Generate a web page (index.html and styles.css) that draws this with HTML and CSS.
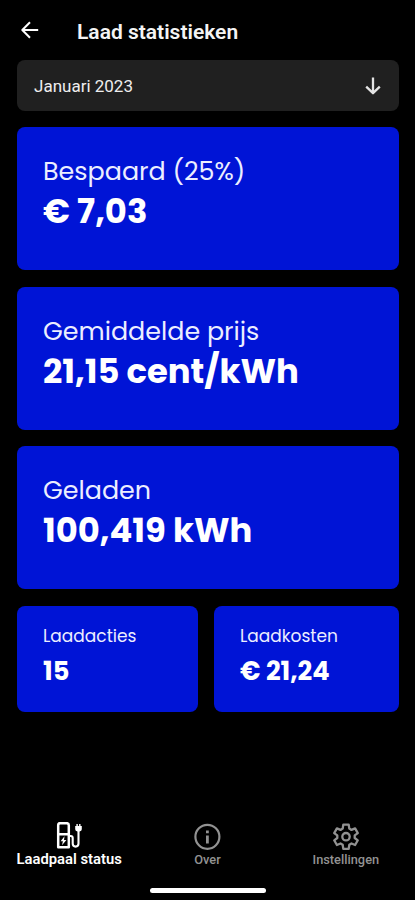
FILE: index.html
```html
<!DOCTYPE html>
<html lang="nl">
<head>
<meta charset="utf-8">
<title>Laad statistieken</title>
<link rel="stylesheet" href="styles.css">
</head>
<body>
<header class="topbar">
  <svg class="back" viewBox="0 0 20 20"><path d="M18.2 10H2.5M10 2.3L2.3 10l7.7 7.7"/></svg>
  <h1>Laad statistieken</h1>
</header>
<main class="content">
  <div class="select"><span>Januari 2023</span>
    <svg class="down" viewBox="0 0 18 20"><path d="M9 1.5v15M2.2 10.6L9 17.2l6.8-6.6"/></svg>
  </div>
  <section class="card"><div class="label">Bespaard (25%)</div><div class="value">€ 7,03</div></section>
  <section class="card"><div class="label">Gemiddelde prijs</div><div class="value">21,15 cent/kWh</div></section>
  <section class="card"><div class="label">Geladen</div><div class="value">100,419 kWh</div></section>
  <div class="row">
    <section class="card small"><div class="label">Laadacties</div><div class="value">15</div></section>
    <section class="card small"><div class="label">Laadkosten</div><div class="value">€ 21,24</div></section>
  </div>
</main>
<nav class="tabs">
  <div class="tab active">
    <svg viewBox="0 0 28 28"><path d="M3.2 25.2V3.2Q3.2 1.2 5.2 1.2h6.6q2 0 2 2v22zM3.2 12.2h10.6" stroke-width="2.5"/><path d="M13.8 14h1.9q2 0 2 2v5.6q0 3 2.9 3t2.9-3V9" stroke-width="2.1"/><path class="fill" d="M20.2 4h1.2V2h1.4v2h1.3V2h1.4v2h1.3v3.2q0 2-2.3 2.3h-2q-2.3-.3-2.3-2.3zM9.5 14.2l-3.9 5.1h2.3l-.9 4 4.4-5.4H9z"/></svg>
    <span>Laadpaal status</span>
  </div>
  <div class="tab">
    <svg viewBox="0 0 28 28"><circle cx="14.4" cy="14.8" r="12" stroke-width="2.2"/><path d="M14.4 13.5v8M14.4 8.4v2.8" stroke-width="2.8"/></svg>
    <span>Over</span>
  </div>
  <div class="tab">
    <svg viewBox="0 0 28 28"><path d="M11.3 2.6h5.4l.6 4 2.2 1.3 3.6-1.5 2.7 4.7-3.1 2.3v2.6l3.1 2.3-2.7 4.7-3.6-1.5-2.2 1.3-.6 4h-5.4l-.6-4-2.2-1.3-3.6 1.5-2.7-4.7 3.1-2.3v-2.6l-3.1-2.3 2.7-4.7 3.6 1.5 2.2-1.3z" stroke-width="2.3"/><circle cx="14" cy="14.7" r="3.7" stroke-width="2.3"/></svg>
    <span>Instellingen</span>
  </div>
</nav>
<div class="home"></div>
</body>
</html>
```
FILE: styles.css
```css
* { box-sizing: border-box; }
body { margin: 0; width: 415px; height: 900px; overflow: hidden; background: #000; color: #fff; font-family: Roboto, sans-serif; display: flex; flex-direction: column; }
svg { display: block; fill: none; stroke: currentColor; stroke-linejoin: round; }
.fill { fill: currentColor; stroke: none; }
.topbar { height: 60px; flex: none; padding: 3px 0 0 20px; display: flex; align-items: center; }
.back { width: 20px; height: 20px; margin-top: -4px; stroke-width: 2; }
h1 { margin: 0 0 0 37px; font-size: 21px; line-height: 24px; font-weight: 600; color: #f4f4f4; }
.content { flex: 1; min-height: 0; padding: 0 16px 0 17px; display: flex; flex-direction: column; gap: 16.6px; }
.select { height: 50.5px; flex: none; border-radius: 8px; background: #202020; display: flex; align-items: center; justify-content: space-between; padding: 1.5px 17px 0 17px; font-size: 17px; color: #eee; }
.down { width: 18px; height: 20px; stroke-width: 2.3; color: #e4e4e4; }
.card { height: 143px; flex: none; border-radius: 8px; background: #0014d6; padding: 24px 26px 0; font-family: Poppins, Inter, sans-serif; white-space: nowrap; }
.label { font-size: 25.4px; line-height: 40px; color: #eceeff; }
.value { font-size: 33.8px; line-height: 42px; font-weight: 700; }
.row { display: grid; grid-template-columns: 181px 185px; gap: 16px; }
.small { height: 106.5px; padding-top: 18px; }
.small .label { font-size: 17px; line-height: 24px; }
.small .value { font-size: 25.7px; line-height: 46.4px; }
.tabs { height: 66px; flex: none; display: flex; }
.tab { flex: 1; display: flex; flex-direction: column; align-items: center; color: #929292; font-size: 12.8px; line-height: 19px; font-weight: 500; white-space: nowrap; }
.tab svg { width: 28px; height: 28px; }
.active { color: #fff; font-weight: 600; font-size: 14.8px; }
.home { width: 116px; height: 5px; border-radius: 3px; background: #fff; margin: 0 0 7.5px 150px; flex: none; }
```
